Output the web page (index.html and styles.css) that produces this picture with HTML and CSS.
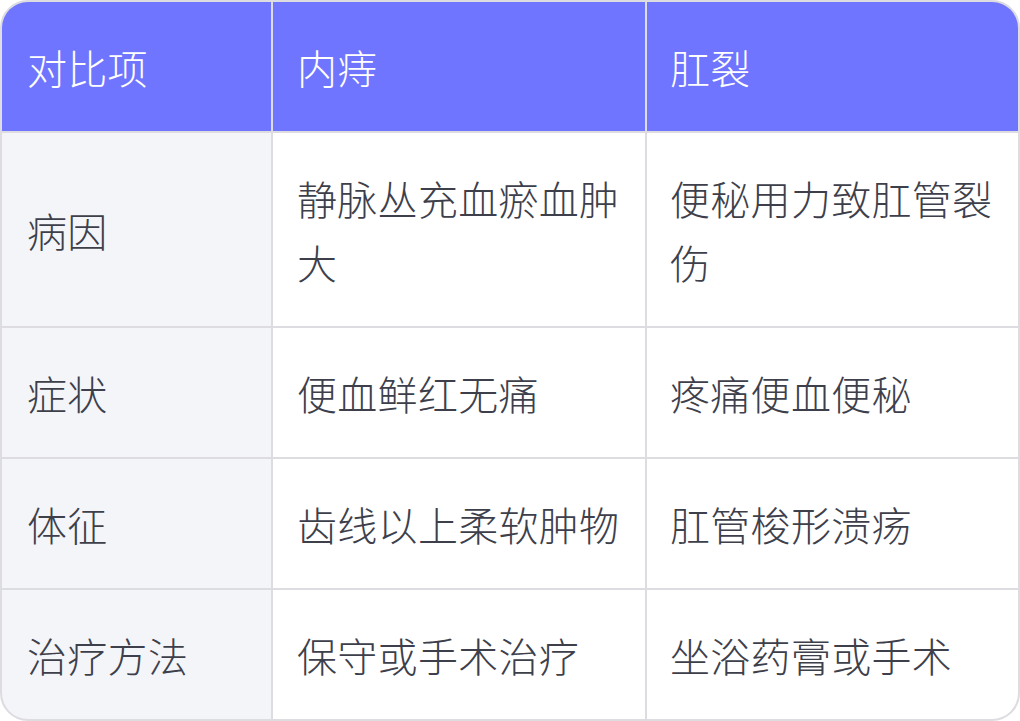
FILE: index.html
```html
<!DOCTYPE html>
<html lang="zh">
<head>
<meta charset="utf-8">
<link rel="stylesheet" href="styles.css">
</head>
<body>
<div class="table">
  <div class="cell head">对比项</div>
  <div class="cell head">内痔</div>
  <div class="cell head">肛裂</div>

  <div class="cell label">病因</div>
  <div class="cell">静脉丛充血瘀血肿大</div>
  <div class="cell">便秘用力致肛管裂伤</div>

  <div class="cell label">症状</div>
  <div class="cell">便血鲜红无痛</div>
  <div class="cell">疼痛便血便秘</div>

  <div class="cell label">体征</div>
  <div class="cell">齿线以上柔软肿物</div>
  <div class="cell">肛管梭形溃疡</div>

  <div class="cell label">治疗方法</div>
  <div class="cell">保守或手术治疗</div>
  <div class="cell">坐浴药膏或手术</div>
</div>
</body>
</html>
```

FILE: styles.css
```css
html, body {
  margin: 0;
  padding: 0;
  background: #ffffff;
}

.table {
  box-sizing: border-box;
  width: 1020px;
  height: 721px;
  display: grid;
  grid-template-columns: 269px 372px 1fr;
  grid-template-rows: 129px 193px 129px 129px 1fr;
  gap: 2px;
  border: 2px solid #dcdce1;
  border-radius: 28px;
  overflow: hidden;
  background: #dcdce1;
  font-family: "Noto Sans CJK SC", "Noto Sans", sans-serif;
  font-size: 40px;
  font-weight: 300;
  line-height: 64px;
  letter-spacing: 0.3px;
  color: #3d404b;
}

.cell {
  background: #ffffff;
  padding: 0 14px 0 25px;
  display: flex;
  align-items: center;
}

.cell:nth-child(3n+2) {
  padding-left: 24px;
}

.cell:nth-child(3n) {
  padding-left: 23px;
}

.head {
  background: #7075ff;
  color: #ffffff;
}

.label {
  background: #f4f5f9;
}
```
